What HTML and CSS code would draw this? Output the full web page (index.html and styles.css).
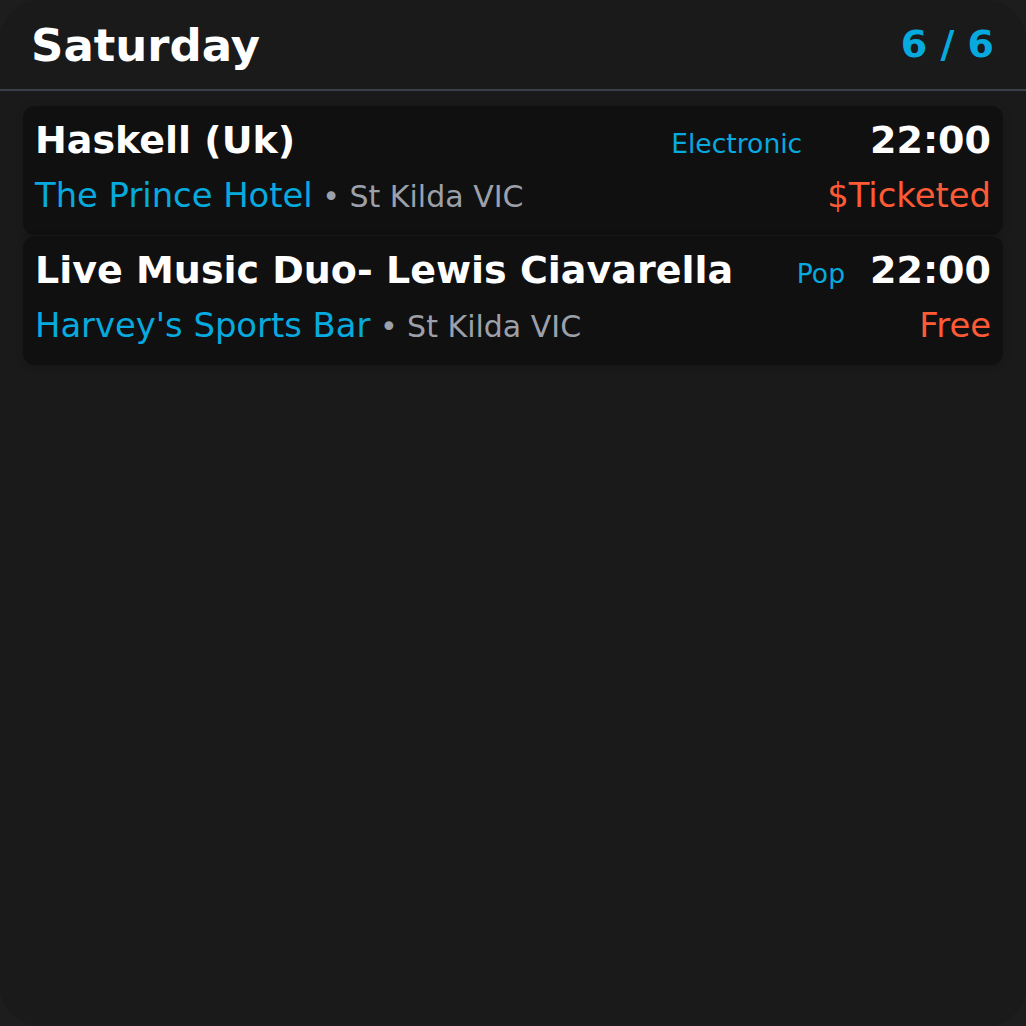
FILE: index.html
```html
<!DOCTYPE html>
<html lang="en">
<head>
<meta charset="utf-8">
<title>Saturday</title>
<link rel="stylesheet" href="styles.css">
</head>
<body>
<div class="panel">
  <header class="header">
    <h1 class="day">Saturday</h1>
    <div class="count">6 / 6</div>
  </header>
  <main class="list">
    <article class="card">
      <div class="main">
        <div class="top-row">
          <span class="title">Haskell (Uk)</span>
          <span class="genre">Electronic</span>
        </div>
        <div class="venue-row">
          <span class="venue">The Prince Hotel</span><span class="place">&nbsp;• St Kilda VIC</span>
        </div>
      </div>
      <div class="side">
        <span class="time">22:00</span>
        <span class="price">$Ticketed</span>
      </div>
    </article>
    <article class="card">
      <div class="main">
        <div class="top-row">
          <span class="title">Live Music Duo- Lewis Ciavarella</span>
          <span class="genre">Pop</span>
        </div>
        <div class="venue-row">
          <span class="venue">Harvey's Sports Bar</span><span class="place">&nbsp;• St Kilda VIC</span>
        </div>
      </div>
      <div class="side">
        <span class="time">22:00</span>
        <span class="price">Free</span>
      </div>
    </article>
  </main>
</div>
</body>
</html>
```
FILE: styles.css
```css
html, body {
  margin: 0;
  padding: 0;
  background: #1d1d1d;
}

body {
  font-family: "DejaVu Sans", "Liberation Sans", sans-serif;
  width: 1026px;
  height: 1026px;
  overflow: hidden;
}

.panel {
  width: 1026px;
  height: 1026px;
  background: #1a1a1a;
  border-radius: 40px;
  box-sizing: border-box;
  display: flex;
  flex-direction: column;
}

.header {
  display: flex;
  align-items: center;
  justify-content: space-between;
  padding: 20px 32px 17px 31px;
  border-bottom: 2px solid #3a3f4a;
}

.day {
  margin: 0;
  font-size: 45px;
  line-height: 52px;
  font-weight: bold;
  color: #ffffff;
}

.count {
  font-size: 38px;
  line-height: 44px;
  font-weight: bold;
  color: #06aade;
  padding-bottom: 4px;
}

.list {
  display: flex;
  flex-direction: column;
  gap: 1px;
  padding: 15px 23px;
}

.card {
  display: flex;
  gap: 25px;
  background: #101010;
  border-radius: 12px;
  padding: 12px 12px 20px 12px;
  box-shadow: 0 2px 8px rgba(0, 0, 0, 0.15);
}

.main {
  flex: 1;
  display: flex;
  flex-direction: column;
  gap: 14px;
  min-width: 0;
}

.top-row {
  display: flex;
  justify-content: space-between;
  align-items: baseline;
  gap: 16px;
}

.title {
  font-size: 38px;
  line-height: 44px;
  font-weight: bold;
  color: #ffffff;
  white-space: nowrap;
}

.genre {
  font-size: 26.6px;
  color: #06aade;
  white-space: nowrap;
}

.venue-row {
  display: flex;
  align-items: baseline;
  white-space: nowrap;
}

.venue {
  font-size: 33.8px;
  line-height: 39px;
  color: #06aade;
}

.place {
  font-size: 30px;
  line-height: 35px;
  color: #9ca0aa;
}

.side {
  display: flex;
  flex-direction: column;
  align-items: flex-end;
  gap: 14px;
}

.time {
  font-size: 38px;
  line-height: 44px;
  font-weight: bold;
  color: #ffffff;
}

.price {
  font-size: 33.8px;
  line-height: 39px;
  color: #ff5a36;
}
```
